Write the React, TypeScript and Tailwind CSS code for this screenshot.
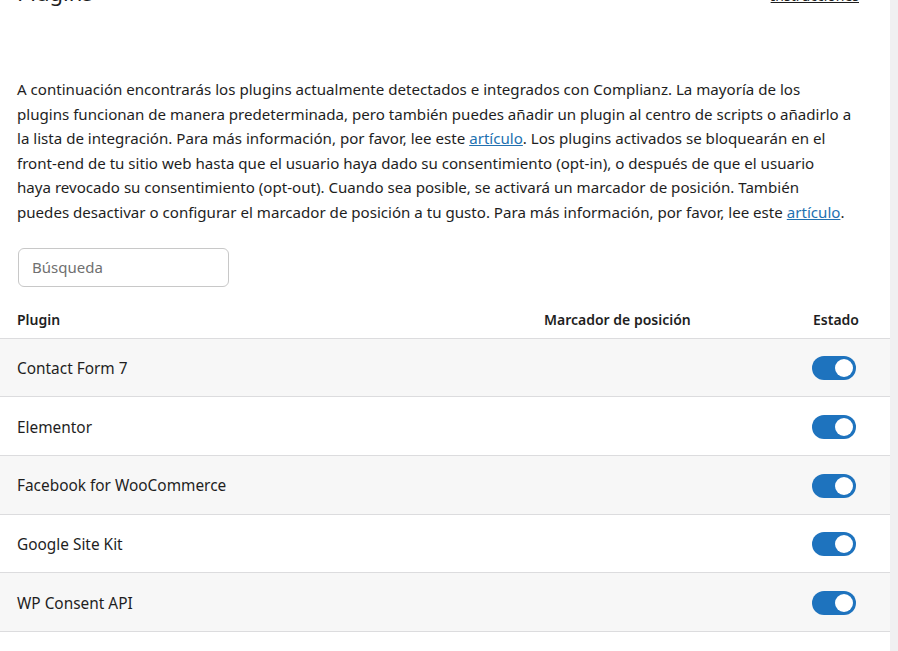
import { useState } from "react";

const plugins = [
  "Contact Form 7",
  "Elementor",
  "Facebook for WooCommerce",
  "Google Site Kit",
  "WP Consent API",
];

function Toggle({ on, onClick }: { on: boolean; onClick: () => void }) {
  return (
    <button
      onClick={onClick}
      className={`flex h-[24px] w-[44px] items-center rounded-full px-[3px] ${
        on ? "justify-end bg-[#1e73be]" : "justify-start bg-[#c3c4c7]"
      }`}
    >
      <span className="h-[18px] w-[18px] rounded-full bg-white" />
    </button>
  );
}

export default function App() {
  const [state, setState] = useState(plugins.map(() => true));

  return (
    <div className="flex min-h-[651px] w-full overflow-hidden bg-[#f0f0f1] font-['Segoe_UI','Noto_Sans',sans-serif] text-[#1e1e1e]">
      <div className="w-[890px] bg-white">
        <div className="mt-[-22px] flex items-end justify-between pl-[17px] pr-[31px]">
          <h3 className="text-[22px] leading-[28px] font-normal">Plugins</h3>
          <a href="#" className="text-[14px] leading-[20px] text-[#1e1e1e] underline">
            Instrucciones
          </a>
        </div>

        <p className="mt-[71px] pl-[17px] pr-[20px] text-[15.1px] leading-[24.6px] whitespace-nowrap">
          A continuación encontrarás los plugins actualmente detectados e integrados con Complianz. La mayoría de los
          <br />
          plugins funcionan de manera predeterminada, pero también puedes añadir un plugin al centro de scripts o añadirlo a
          <br />
          la lista de integración. Para más información, por favor, lee este{" "}
          <a href="#" className="text-[#2271b1] underline">
            artículo
          </a>
          . Los plugins activados se bloquearán en el
          <br />
          front-end de tu sitio web hasta que el usuario haya dado su consentimiento (opt-in), o después de que el usuario
          <br />
          haya revocado su consentimiento (opt-out). Cuando sea posible, se activará un marcador de posición. También
          <br />
          puedes desactivar o configurar el marcador de posición a tu gusto. Para más información, por favor, lee este{" "}
          <a href="#" className="text-[#2271b1] underline">
            artículo
          </a>
          .
        </p>

        <div className="mt-[23px] pl-[18px]">
          <input
            placeholder="Búsqueda"
            className="h-[39px] w-[211px] rounded-[6px] border border-[#c8c8c8] px-[13px] text-[15px] placeholder:text-[#707070] outline-none"
          />
        </div>

        <div className="mt-[22px] flex h-[30px] items-start border-b border-[#dcdcde] pl-[17px] pr-[31px] text-[14px] leading-[22px] font-semibold">
          <div className="flex-1">Plugin</div>
          <div className="flex w-[315px] justify-between whitespace-nowrap">
            <span>Marcador de posición</span>
            <span>Estado</span>
          </div>
        </div>

        {plugins.map((name, i) => (
          <div
            key={name}
            className={`flex h-[58.7px] items-center border-b border-[#dcdcde] pt-[2px] pl-[17px] pr-[34px] text-[15.4px] ${
              i % 2 === 0 ? "bg-[#f7f7f7]" : "bg-white"
            }`}
          >
            <div className="flex-1">{name}</div>
            <Toggle
              on={state[i]}
              onClick={() => setState((s) => s.map((v, j) => (j === i ? !v : v)))}
            />
          </div>
        ))}
      </div>
    </div>
  );
}
